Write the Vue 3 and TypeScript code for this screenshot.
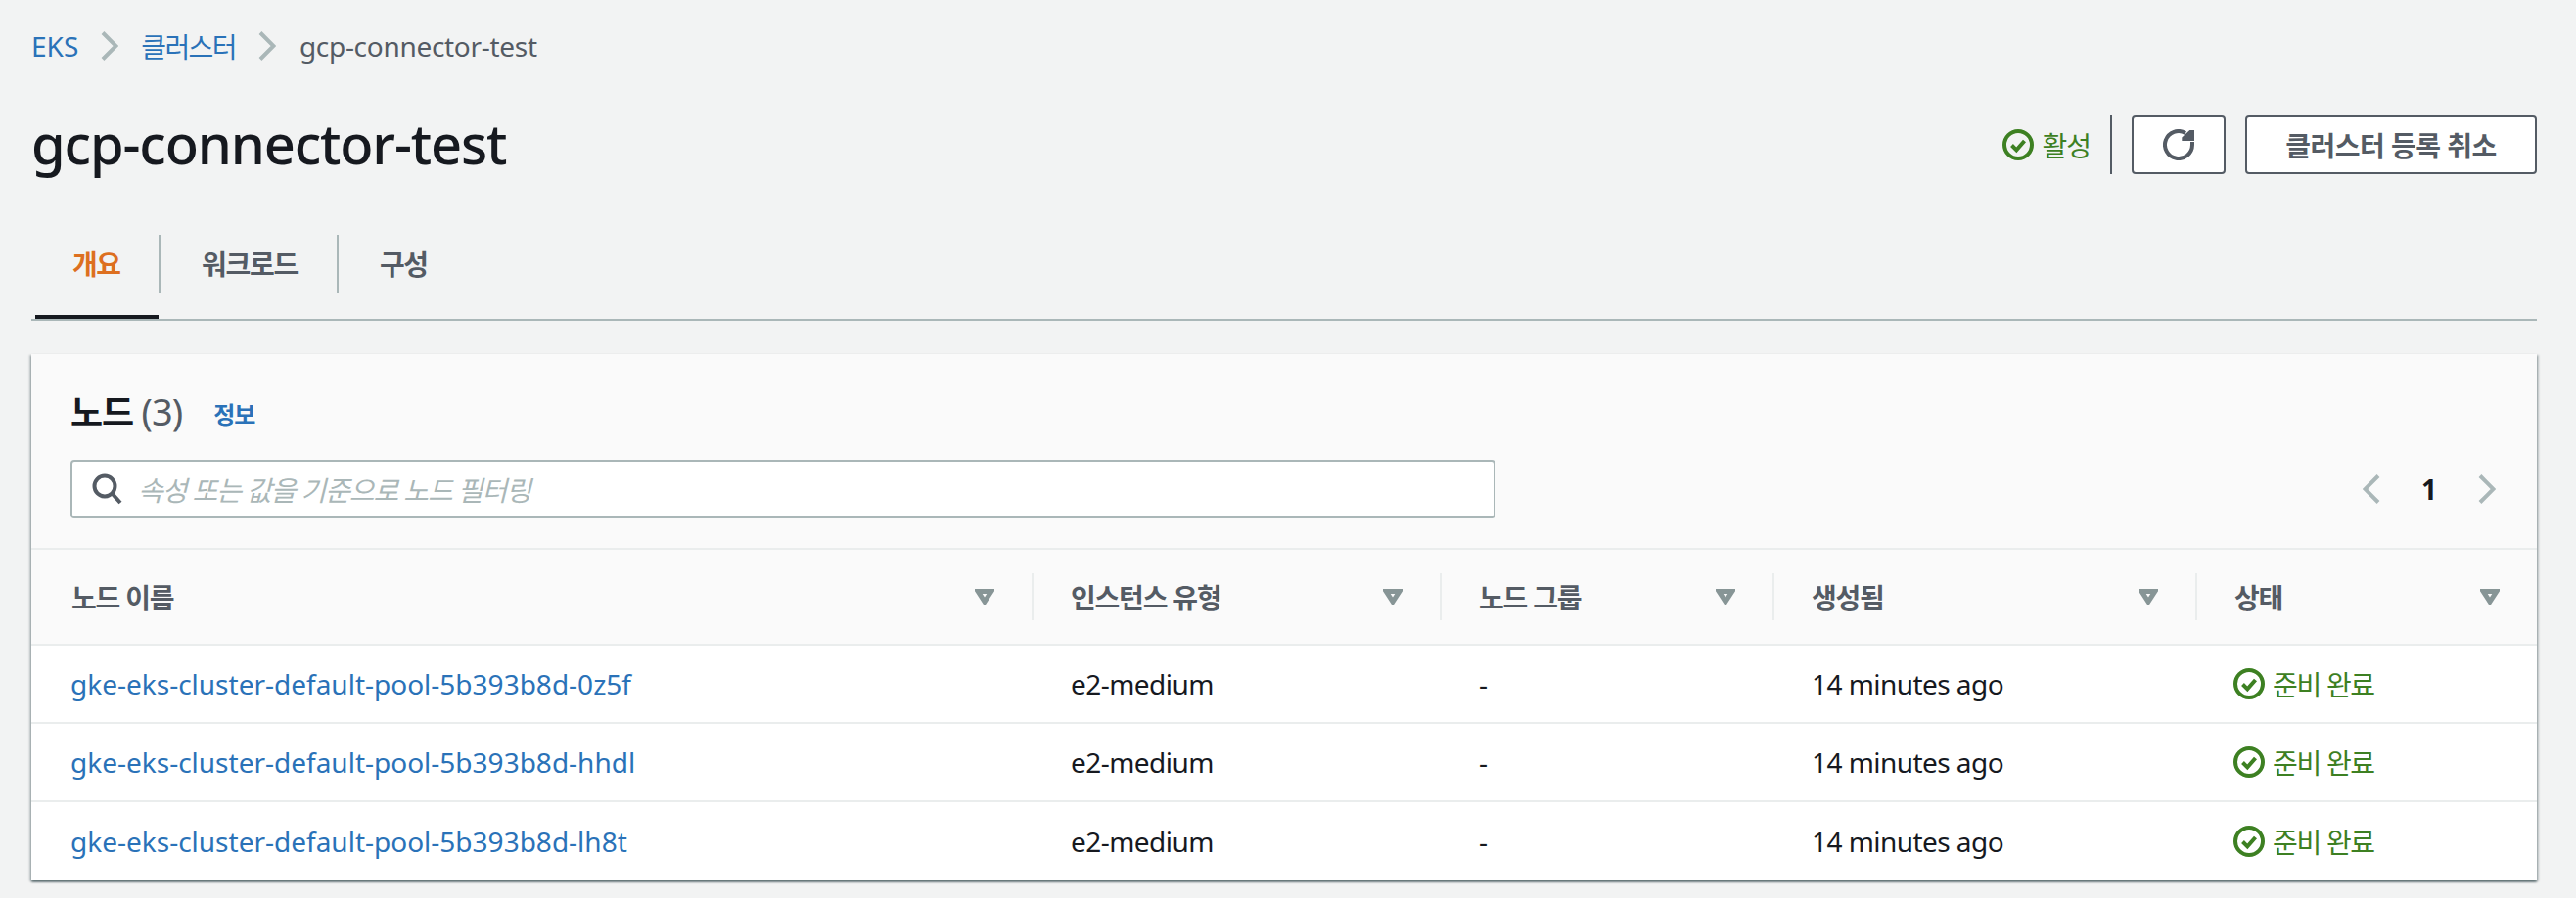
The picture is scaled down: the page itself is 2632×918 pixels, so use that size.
<script setup lang="ts">
interface Col { label: string; cls: string }
const cols: Col[] = [
  { label: '노드 이름', cls: 'c1' },
  { label: '인스턴스 유형', cls: 'c2' },
  { label: '노드 그룹', cls: 'c3' },
  { label: '생성됨', cls: 'c4' },
  { label: '상태', cls: 'c5' },
]
const rows = [
  'gke-eks-cluster-default-pool-5b393b8d-0z5f',
  'gke-eks-cluster-default-pool-5b393b8d-hhdl',
  'gke-eks-cluster-default-pool-5b393b8d-lh8t',
]
</script>

<template>
  <div class="page">
    <nav class="crumbs">
      <a class="link">EKS</a>
      <svg class="chev" viewBox="0 0 18 30"><path d="M2 1.5L15.5 15 2 28.5" /></svg>
      <a class="link ko">클러스터</a>
      <svg class="chev" viewBox="0 0 18 30"><path d="M2 1.5L15.5 15 2 28.5" /></svg>
      <span class="current">gcp-connector-test</span>
    </nav>

    <header class="head">
      <h1>gcp-connector-test</h1>
      <div class="actions">
        <span class="status top">
          <svg class="ok" viewBox="0 0 32 32"><circle cx="16" cy="16" r="14" /><path d="M9.5 16.5l4.8 4.8 8.2-9.3" /></svg>
          <span>활성</span>
        </span>
        <span class="vsep"></span>
        <button class="btn refresh">
          <svg viewBox="0 0 32 32"><path d="M30 13v3a14 14 0 1 1-7-12.1" /><path class="fill" d="M32 1v11H19.3V8.5l8-7.5z" /></svg>
        </button>
        <button class="btn">클러스터 등록 취소</button>
      </div>
    </header>

    <div class="tabs">
      <div class="tab active">개요</div>
      <div class="tab second">워크로드</div>
      <div class="tab third">구성</div>
    </div>

    <section class="card">
      <div class="card-head">
        <div class="title-row">
          <h2>노드 <span>(3)</span></h2>
          <a class="info">정보</a>
        </div>
        <div class="tools">
          <div class="search">
            <svg viewBox="0 0 32 32"><circle cx="13" cy="13" r="10.5" /><path d="M20.5 20.5l8.5 9.5" /></svg>
            <span>속성 또는 값을 기준으로 노드 필터링</span>
          </div>
          <div class="pager">
            <svg viewBox="0 0 18 30"><path d="M16 1.5L2.5 15 16 28.5" /></svg>
            <b>1</b>
            <svg viewBox="0 0 18 30"><path d="M2 1.5L15.5 15 2 28.5" /></svg>
          </div>
        </div>
      </div>

      <div class="thead">
        <div v-for="c in cols" :key="c.label" class="th" :class="c.cls">
          <span>{{ c.label }}</span>
          <svg viewBox="0 0 20 16"><path d="M3.2 2.5h13.6L10 13z" /></svg>
        </div>
      </div>

      <div v-for="r in rows" :key="r" class="tr">
        <div class="td c1"><a class="link">{{ r }}</a></div>
        <div class="td c2 plain">e2-medium</div>
        <div class="td c3">-</div>
        <div class="td c4 plain">14 minutes ago</div>
        <div class="td c5">
          <span class="status row">
            <svg class="ok" viewBox="0 0 32 32"><circle cx="16" cy="16" r="14" /><path d="M9.5 16.5l4.8 4.8 8.2-9.3" /></svg>
            <span>준비 완료</span>
          </span>
        </div>
      </div>
    </section>
  </div>
</template>

<style>
html, body { margin: 0; background: #f2f3f3; }
</style>

<style scoped>
.page {
  box-sizing: border-box;
  width: 2632px;
  height: 918px;
  padding: 0 40px 0 32px;
  background: #f2f3f3;
  font-family: "Noto Sans", "Noto Sans CJK KR", sans-serif;
  font-size: 28px;
  color: #16191f;
  overflow: hidden;
}
.crumbs { box-sizing: border-box; display: flex; align-items: center; height: 96px; padding-bottom: 2px; gap: 23px; }
.link { color: #2a72b8; }
.ko { letter-spacing: -1.6px; }
.current { color: #545b64; margin-left: 1px; letter-spacing: -0.3px; }
.chev { width: 18px; height: 30px; fill: none; stroke: #aab7b8; stroke-width: 4; }
.head { display: flex; justify-content: space-between; align-items: center; height: 104px; }
h1 { margin: 0 0 5px; font-size: 56px; font-weight: 500; letter-spacing: -1.15px; }
.actions { display: flex; align-items: center; }
.status { display: inline-flex; align-items: center; gap: 8px; color: #3d8022; font-size: 28px; letter-spacing: -1px; }
.status.row { margin: 3px 0 0 -1px; letter-spacing: -1.3px; }
.ok { width: 32px; height: 32px; fill: none; stroke: #3d8022; stroke-width: 4; }
.vsep { width: 2px; height: 60px; background: #545b64; margin: 0 20px 0 20px; }
.btn {
  box-sizing: border-box;
  height: 60px;
  width: 298px;
  border: 2px solid #545b64;
  border-radius: 4px;
  background: #fff;
  color: #545b64;
  font: 700 28px "Noto Sans", "Noto Sans CJK KR", sans-serif;
  letter-spacing: -0.5px;
  padding: 0;
}
.refresh { width: 96px; margin-right: 20px; display: flex; align-items: center; justify-content: center; }
.refresh svg { width: 32px; height: 32px; fill: none; stroke: #545b64; stroke-width: 4; }
.refresh .fill { fill: #545b64; stroke: none; }
.tabs { box-sizing: border-box; display: flex; height: 106px; margin-top: 22px; border-bottom: 2px solid #aab7b8; align-items: flex-start; }
.tab { position: relative; height: 60px; margin-top: 18px; line-height: 60px; color: #545b64; font-weight: 700; letter-spacing: -1.3px; }
.tab.active { color: #dd6f1f; width: 128px; padding-left: 38px; box-sizing: border-box; margin-left: 4px; border-right: 2px solid #aab7b8; letter-spacing: -1.6px; }
.tab.active::after { content: ''; position: absolute; left: 0; right: 0; bottom: -26px; height: 4px; background: #16191f; }
.tab.second { width: 182px; padding-left: 42px; box-sizing: border-box; border-right: 2px solid #aab7b8; }
.tab.third { padding-left: 42px; letter-spacing: -1.6px; }
.card { box-sizing: border-box; margin-top: 34px; height: 538px; background: #fff; box-shadow: 0 2px 2px rgba(0, 28, 36, .45), 2px 1px 2px rgba(0, 28, 36, .2), -2px 1px 2px rgba(0, 28, 36, .2); }
.card-head { height: 200px; box-sizing: border-box; padding: 33px 40px 0; background: #fafafa; border-bottom: 2px solid #eaeded; }
.title-row { display: flex; align-items: center; height: 48px; margin-bottom: 27px; }
h2 { margin: 0; font-size: 36px; font-weight: 700; letter-spacing: -1px; }
h2 span { color: #545b64; font-weight: 400; font-size: 38px; }
.info { margin-left: 32px; margin-top: 6px; color: #2a72b8; font-size: 24px; font-weight: 700; letter-spacing: -1px; }
.tools { display: flex; justify-content: space-between; align-items: center; }
.search { box-sizing: border-box; width: 1456px; height: 60px; border: 2px solid #aab7b8; border-radius: 4px; background: #fff; display: flex; align-items: center; padding-left: 20px; gap: 15px; color: #aab7b8; font-style: italic; letter-spacing: -1.1px; }
.search svg { width: 32px; height: 32px; fill: none; stroke: #545b64; stroke-width: 4; }
.pager { display: flex; align-items: center; gap: 42px; margin-right: 2px; }
.pager svg { width: 18px; height: 30px; fill: none; stroke: #aab7b8; stroke-width: 4; }
.pager b { color: #16191f; }
.thead { display: flex; height: 98px; background: #fafafa; box-sizing: border-box; border-bottom: 2px solid #eaeded; }
.th { position: relative; box-sizing: border-box; display: flex; align-items: center; justify-content: space-between; color: #545b64; font-weight: 700; padding: 0 38px 0 40px; letter-spacing: -1.2px; }
.th.c1 { padding-left: 41px; }
.th + .th::before { content: ''; position: absolute; left: 0; top: 24px; height: 48px; width: 2px; background: #eaeded; }
.th svg { width: 20px; height: 16px; fill: none; stroke: #879596; stroke-width: 5; }
.c1 { width: 1022px; }
.c2 { width: 417px; }
.c3 { width: 340px; }
.c4 { width: 432px; }
.c5 { width: 349px; }
.tr { display: flex; height: 80px; align-items: center; box-sizing: border-box; border-bottom: 2px solid #eaeded; }
.tr:last-child { border-bottom: none; }
.td { box-sizing: border-box; padding-left: 40px; }
.plain { letter-spacing: -0.55px; }
</style>
